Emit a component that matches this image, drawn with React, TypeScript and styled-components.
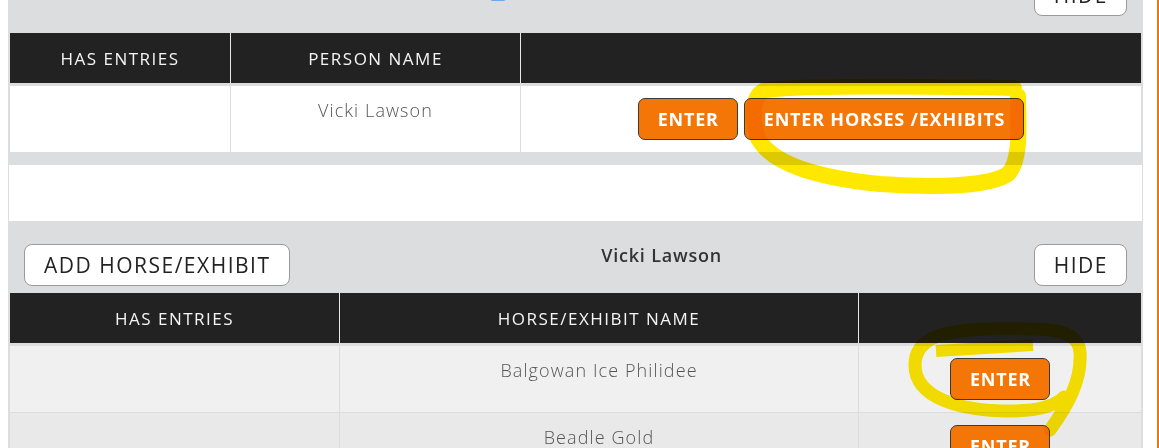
import React from 'react';
import styled, { createGlobalStyle } from 'styled-components';

const GlobalStyle = createGlobalStyle`
  html, body {
    margin: 0;
    padding: 0;
    background: #fff;
  }

  body {
    font-family: 'Open Sans', 'Liberation Sans', sans-serif;
    color: #333;
  }

  * {
    box-sizing: border-box;
  }
`;

const Page = styled.div`
  position: relative;
  width: 1159px;
  height: 448px;
  overflow: hidden;
  padding-left: 8px;
  border-right: 2px solid #e8751a;
  background: #fff;
`;

const Container = styled.div`
  width: 1135px;
`;

const Panel = styled.section<{ $pullUp?: number; $padBottom?: number }>`
  background: #dcdddf;
  margin-top: ${(p) => -(p.$pullUp ?? 0)}px;
  padding: 0 2px ${(p) => p.$padBottom ?? 0}px;
`;

const Bar = styled.div<{ $padBottom: number }>`
  display: flex;
  align-items: flex-start;
  padding: 23px 14px ${(p) => p.$padBottom}px;
`;

const BarTitle = styled.div`
  flex: 1;
  margin-top: -1px;
  text-align: center;
  font-size: 18px;
  font-weight: 600;
  letter-spacing: 0.8px;
  line-height: 24px;
  color: #333;
`;

const CheckSlot = styled.div`
  flex: 1;
  display: flex;
  justify-content: center;
  padding: 11px 61px 0 0;
`;

const Checkbox = styled.span`
  display: block;
  width: 16px;
  height: 16px;
  border-radius: 3px;
  background: #6aa8ef;
`;

const PlainButton = styled.button`
  height: 42px;
  padding: 0 18px 0 19px;
  border: 1px solid #9a9a9a;
  border-radius: 8px;
  background: #fff;
  color: #222;
  font-family: inherit;
  font-size: 21px;
  font-weight: 500;
  letter-spacing: 1.5px;
  cursor: pointer;
`;

const OrangeButton = styled.button`
  height: 42px;
  padding: 0 18px 0 19px;
  border: 1px solid #3a3a3a;
  border-radius: 7px;
  background: #f47607;
  color: #fff;
  font-family: inherit;
  font-size: 18px;
  font-weight: 700;
  letter-spacing: 0.8px;
  cursor: pointer;
`;

const HeadRow = styled.div<{ $cols: string }>`
  display: grid;
  grid-template-columns: ${(p) => p.$cols};
  background: #222;
  border-bottom: 3px solid #dddddd;
`;

const HeadCell = styled.div`
  height: 50px;
  display: flex;
  align-items: center;
  justify-content: center;
  color: #f4f4f4;
  font-size: 17px;
  letter-spacing: 1.5px;

  & + & {
    border-left: 1px solid #e8e8e8;
  }
`;

const BodyRow = styled.div<{ $cols: string; $bg: string; $line?: boolean }>`
  display: grid;
  grid-template-columns: ${(p) => p.$cols};
  background: ${(p) => p.$bg};
  border-bottom: ${(p) => (p.$line ? '1px solid #dcdcdc' : 'none')};
`;

const Cell = styled.div`
  min-height: 66px;
  padding: 12px 8px;
  text-align: center;
  font-size: 18px;
  font-weight: 300;
  letter-spacing: 1.1px;
  line-height: 24px;
  color: #555;

  & + & {
    border-left: 1px solid #dcdcdc;
  }
`;

const ActionCell = styled(Cell)`
  display: flex;
  justify-content: center;
  align-items: flex-start;
  gap: 6px;
`;

const WhiteGap = styled.div`
  height: 56px;
  border-left: 1px solid #dddddd;
  border-right: 1px solid #dddddd;
`;

const Scribbles = styled.svg`
  position: absolute;
  inset: 0;
  pointer-events: none;
  mix-blend-mode: multiply;
`;

const personCols = '220px 290px 1fr';
const horseCols = '329px 519px 1fr';

const horses = [
  { name: 'Balgowan Ice Philidee', bg: '#f0f0f0' },
  { name: 'Beadle Gold', bg: '#e9e9e9' },
];

export default function App() {
  return (
    <>
      <GlobalStyle />
      <Page>
        <Container>
          <Panel $pullUp={49} $padBottom={13}>
            <Bar $padBottom={17}>
              <CheckSlot>
                <Checkbox />
              </CheckSlot>
              <PlainButton>HIDE</PlainButton>
            </Bar>
            <HeadRow $cols={personCols}>
              <HeadCell>HAS ENTRIES</HeadCell>
              <HeadCell>PERSON NAME</HeadCell>
              <HeadCell />
            </HeadRow>
            <BodyRow $cols={personCols} $bg='#fff'>
              <Cell />
              <Cell>Vicki Lawson</Cell>
              <ActionCell>
                <OrangeButton>ENTER</OrangeButton>
                <OrangeButton>ENTER HORSES /EXHIBITS</OrangeButton>
              </ActionCell>
            </BodyRow>
          </Panel>

          <WhiteGap />

          <Panel>
            <Bar $padBottom={7}>
              <PlainButton>ADD HORSE/EXHIBIT</PlainButton>
              <BarTitle>Vicki Lawson</BarTitle>
              <PlainButton>HIDE</PlainButton>
            </Bar>
            <HeadRow $cols={horseCols}>
              <HeadCell>HAS ENTRIES</HeadCell>
              <HeadCell>HORSE/EXHIBIT NAME</HeadCell>
              <HeadCell />
            </HeadRow>
            {horses.map((h) => (
              <BodyRow key={h.name} $cols={horseCols} $bg={h.bg} $line>
                <Cell />
                <Cell>{h.name}</Cell>
                <ActionCell>
                  <OrangeButton>ENTER</OrangeButton>
                </ActionCell>
              </BodyRow>
            ))}
          </Panel>
        </Container>

        {/* highlighter marks drawn over the screenshot */}
        <Scribbles width='1159' height='448' viewBox='0 0 1159 448'>
          <g fill='none' stroke='#ffe800' strokeLinecap='round' strokeLinejoin='round'>
            <path
              strokeWidth='16'
              d='M1014 88 C900 86 800 86 766 90 C752 94 751 118 758 138 C772 165 820 178 880 184 C940 188 990 186 1008 174 C1022 160 1018 120 1018 96'
            />
            <path strokeWidth='12' strokeLinecap='butt' d='M936 351 L1033 345' />
            <path
              strokeWidth='13'
              d='M1050 430 C1068 405 1082 380 1080 352 C1078 326 1040 328 990 329 C945 330 915 337 915 365 C915 398 960 411 1010 411 C1040 411 1056 405 1064 397'
            />
          </g>
        </Scribbles>
      </Page>
    </>
  );
}
